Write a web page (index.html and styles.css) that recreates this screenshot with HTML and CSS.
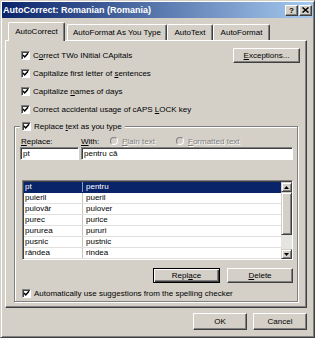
FILE: index.html
```html
<!DOCTYPE html>
<html lang="en">
<head>
    <meta charset="UTF-8">
    <meta name="viewport" content="width=device-width, initial-scale=1.0">
    <title>AutoCorrect: Romanian (Romania)</title>
    <link rel="stylesheet" href="styles.css">
</head>
<body>
    <div class="window">
        <div class="titlebar">
            <span class="title">AutoCorrect: Romanian (Romania)</span>
            <div class="caption-buttons">
                <span class="cap-btn help">?</span>
                <span class="cap-btn">
                    <svg width="7" height="6" viewBox="0 0 7 6"><path d="M0.5 0.5l6 5M6.5 0.5l-6 5" stroke="#000" stroke-width="1.5"/></svg>
                </span>
            </div>
        </div>

        <div class="tabs">
            <div class="tab active">AutoCorrect</div>
            <div class="tab tab-asyoutype">AutoFormat As You Type</div>
            <div class="tab tab-autotext">AutoText</div>
            <div class="tab tab-autoformat">AutoFormat</div>
        </div>

        <div class="panel">
            <div class="option">
                <span class="cb"><svg width="7" height="7" viewBox="0 0 7 7"><path d="M1 3l1.7 1.9L6 1.2" fill="none" stroke="#000" stroke-width="1.5"/></svg></span>
                <span>C<u>o</u>rrect TWo INitial CApitals</span>
                <button class="btn exceptions"><u>E</u>xceptions...</button>
            </div>
            <div class="option">
                <span class="cb"><svg width="7" height="7" viewBox="0 0 7 7"><path d="M1 3l1.7 1.9L6 1.2" fill="none" stroke="#000" stroke-width="1.5"/></svg></span>
                <span>Capitalize first letter of <u>s</u>entences</span>
            </div>
            <div class="option">
                <span class="cb"><svg width="7" height="7" viewBox="0 0 7 7"><path d="M1 3l1.7 1.9L6 1.2" fill="none" stroke="#000" stroke-width="1.5"/></svg></span>
                <span>Capitalize <u>n</u>ames of days</span>
            </div>
            <div class="option">
                <span class="cb"><svg width="7" height="7" viewBox="0 0 7 7"><path d="M1 3l1.7 1.9L6 1.2" fill="none" stroke="#000" stroke-width="1.5"/></svg></span>
                <span>Correct accidental usage of cAPS <u>L</u>OCK key</span>
            </div>

            <fieldset class="group">
                <legend>
                    <span class="cb"><svg width="7" height="7" viewBox="0 0 7 7"><path d="M1 3l1.7 1.9L6 1.2" fill="none" stroke="#000" stroke-width="1.5"/></svg></span>
                    <span>Replace <u>t</u>ext as you type</span>
                </legend>

                <div class="labels">
                    <span class="lbl-replace"><u>R</u>eplace:</span>
                    <span class="lbl-with"><u>W</u>ith:</span>
                    <span class="radio-item plain"><span class="radio"></span><span class="disabled"><u>P</u>lain text</span></span>
                    <span class="radio-item"><span class="radio"></span><span class="disabled"><u>F</u>ormatted text</span></span>
                </div>

                <div class="fields">
                    <div class="field field-replace">pt</div>
                    <div class="field field-with">pentru că</div>
                </div>

                <div class="list">
                    <div class="rows">
                        <div class="row selected"><span class="c1">pt</span><span class="c2">pentru</span></div>
                        <div class="row"><span class="c1">puieril</span><span class="c2">pueril</span></div>
                        <div class="row"><span class="c1">pulovăr</span><span class="c2">pulover</span></div>
                        <div class="row"><span class="c1">purec</span><span class="c2">purice</span></div>
                        <div class="row"><span class="c1">pururea</span><span class="c2">pururi</span></div>
                        <div class="row"><span class="c1">pusnic</span><span class="c2">pustnic</span></div>
                        <div class="row"><span class="c1">rândea</span><span class="c2">rindea</span></div>
                    </div>
                    <div class="scrollbar">
                        <span class="sb-btn"><svg width="5" height="3" viewBox="0 0 5 3"><path d="M2.5 0L5 3H0z"/></svg></span>
                        <span class="sb-thumb"></span>
                        <span class="sb-track"></span>
                        <span class="sb-btn"><svg width="5" height="3" viewBox="0 0 5 3"><path d="M0 0h5L2.5 3z"/></svg></span>
                    </div>
                </div>

                <div class="actions">
                    <button class="btn default btn-replace">Repl<u>a</u>ce</button>
                    <button class="btn btn-delete"><u>D</u>elete</button>
                </div>

                <div class="option spelling">
                    <span class="cb"><svg width="7" height="7" viewBox="0 0 7 7"><path d="M1 3l1.7 1.9L6 1.2" fill="none" stroke="#000" stroke-width="1.5"/></svg></span>
                    <span>Automatically use suggestions from the spelling checker</span>
                </div>
            </fieldset>
        </div>

        <div class="footer">
            <button class="btn btn-dialog">OK</button>
            <button class="btn btn-dialog">Cancel</button>
        </div>
    </div>
</body>
</html>
```

FILE: styles.css
```css
body {
    margin: 0;
    font-family: "Liberation Sans", Arial, sans-serif;
    font-size: 8px;
    color: #000;
    background-color: #d4d0c8;
}
.window {
    width: 315px;
    height: 338px;
    box-sizing: border-box;
    padding: 1px;
    background-color: #d4d0c8;
    border: 1px solid;
    border-color: #d4d0c8 #404040 #404040 #d4d0c8;
    box-shadow: inset 1px 1px #fff, inset -1px -1px #808080;
}
.titlebar {
    height: 16px;
    display: flex;
    align-items: center;
    justify-content: space-between;
    padding: 0 1px 0 1px;
    background: linear-gradient(to right, #0a246a, #a6caf0);
}
.title {
    color: #fff;
    font-weight: bold;
    font-size: 9px;
}
.caption-buttons {
    display: flex;
    gap: 1px;
}
.cap-btn {
    width: 13px;
    height: 11px;
    box-sizing: border-box;
    display: flex;
    align-items: center;
    justify-content: center;
    background-color: #d4d0c8;
    border: 1px solid;
    border-color: #fff #404040 #404040 #fff;
    box-shadow: inset -1px -1px #808080;
    font-weight: bold;
    font-size: 8px;
    line-height: 9px;
}
.tabs {
    display: flex;
    align-items: flex-end;
    height: 18px;
    margin-top: 4px;
    padding-left: 6px;
}
.tab {
    height: 16px;
    box-sizing: border-box;
    border: 1px solid;
    border-color: #fff #404040 transparent #fff;
    border-bottom: none;
    border-radius: 2px 2px 0 0;
    box-shadow: inset -1px 0 #808080;
    text-align: center;
    line-height: 15px;
    white-space: nowrap;
}
.tab.active {
    position: relative;
    z-index: 1;
    width: 57px;
    height: 19px;
    margin-bottom: -1px;
    margin-right: 2px;
    background-color: #d4d0c8;
    line-height: 18px;
}
.tab-asyoutype { width: 100px; }
.tab-autotext { width: 46px; }
.tab-autoformat { width: 57px; }
.panel {
    height: 268px;
    box-sizing: border-box;
    margin: 0 6px 0 3px;
    padding-top: 5px;
    border: 1px solid;
    border-color: #fff #404040 #404040 #fff;
    box-shadow: inset -1px -1px #808080;
}
.option {
    display: flex;
    align-items: center;
    height: 18px;
    padding: 0 6px 0 15px;
    white-space: nowrap;
}
.cb {
    width: 9px;
    height: 9px;
    box-sizing: border-box;
    flex-shrink: 0;
    margin-right: 3px;
    background-color: #fff;
    border: 1px solid;
    border-color: #808080 #fff #fff #808080;
    box-shadow: inset 1px 1px #404040;
}
.cb svg {
    display: block;
}
.btn {
    font: inherit;
    color: #000;
    height: 15px;
    padding: 0;
    box-sizing: border-box;
    background-color: #d4d0c8;
    border: 1px solid;
    border-color: #fff #404040 #404040 #fff;
    box-shadow: inset -1px -1px #808080;
}
.btn.default {
    border-color: #000;
    box-shadow: inset 1px 1px #fff, inset -1px -1px #404040, inset -2px -2px #808080;
}
.exceptions {
    width: 67px;
    margin-left: auto;
}
.group {
    margin: 2px 8px 0;
    padding: 4px 4px 2px 5px;
    min-width: 0;
    border: 1px solid #808080;
    box-shadow: inset 1px 1px #fff, 1px 1px #fff;
}
.group legend {
    display: flex;
    align-items: center;
    height: 12px;
    padding: 0 3px 0 2px;
    background-color: #d4d0c8;
    white-space: nowrap;
}
.labels {
    display: flex;
    align-items: center;
    height: 10px;
    white-space: nowrap;
}
.lbl-replace {
    width: 60px;
    padding-left: 1px;
}
.lbl-with {
    width: 29px;
}
.radio-item {
    display: flex;
    align-items: center;
    gap: 4px;
}
.radio-item.plain {
    width: 66px;
}
.radio {
    width: 8px;
    height: 8px;
    box-sizing: border-box;
    border-radius: 50%;
    border: 1px solid;
    border-color: #808080 #fff #fff #808080;
    background-color: #d4d0c8;
}
.disabled {
    color: #808080;
    text-shadow: 1px 1px 0 #fff;
}
.fields {
    display: flex;
    gap: 2px;
    margin-top: 1px;
}
.field {
    height: 13px;
    box-sizing: border-box;
    padding-left: 2px;
    line-height: 11px;
    background-color: #fff;
    border: 1px solid;
    border-color: #808080 #fff #fff #808080;
    box-shadow: inset 1px 1px #404040;
}
.field-replace {
    width: 59px;
}
.field-with {
    flex: 1;
}
.list {
    display: flex;
    height: 80px;
    box-sizing: border-box;
    margin: 20px 0 0 2px;
    background-color: #fff;
    border: 1px solid;
    border-color: #808080 #fff #fff #808080;
    box-shadow: inset 1px 1px #404040;
    padding: 1px 0 0 1px;
    overflow: hidden;
}
.rows {
    flex: 1;
}
.row {
    display: flex;
    height: 11px;
    box-sizing: border-box;
    line-height: 10px;
    border-bottom: 1px solid #e2e0dc;
}
.row .c1 {
    width: 59px;
    padding-left: 1px;
    box-sizing: border-box;
    border-right: 1px solid #c8c5bf;
}
.row .c2 {
    padding-left: 3px;
}
.row.selected {
    background-color: #0a246a;
    color: #fff;
    border-bottom-color: #0a246a;
}
.row.selected .c1 {
    border-right-color: #8a9cc4;
}
.scrollbar {
    width: 11px;
    display: flex;
    flex-direction: column;
}
.sb-btn,
.sb-thumb {
    box-sizing: border-box;
    background-color: #d4d0c8;
    border: 1px solid;
    border-color: #d4d0c8 #404040 #404040 #d4d0c8;
    box-shadow: inset 1px 1px #fff, inset -1px -1px #808080;
}
.sb-btn {
    height: 10px;
    display: flex;
    align-items: center;
    justify-content: center;
}
.sb-thumb {
    height: 43px;
}
.sb-track {
    flex: 1;
    background-color: #e6e4e0;
}
.actions {
    display: flex;
    justify-content: flex-end;
    gap: 7px;
    margin-top: 8px;
}
.btn-replace {
    width: 67px;
}
.btn-delete {
    width: 66px;
}
.option.spelling {
    height: 12px;
    margin-top: 4px;
    padding: 0 0 0 2px;
}
.option.spelling .cb {
    margin-right: 3px;
}
.footer {
    display: flex;
    justify-content: flex-end;
    gap: 6px;
    padding-top: 5px;
    margin-right: 6px;
}
.btn-dialog {
    width: 54px;
    height: 17px;
}
```
